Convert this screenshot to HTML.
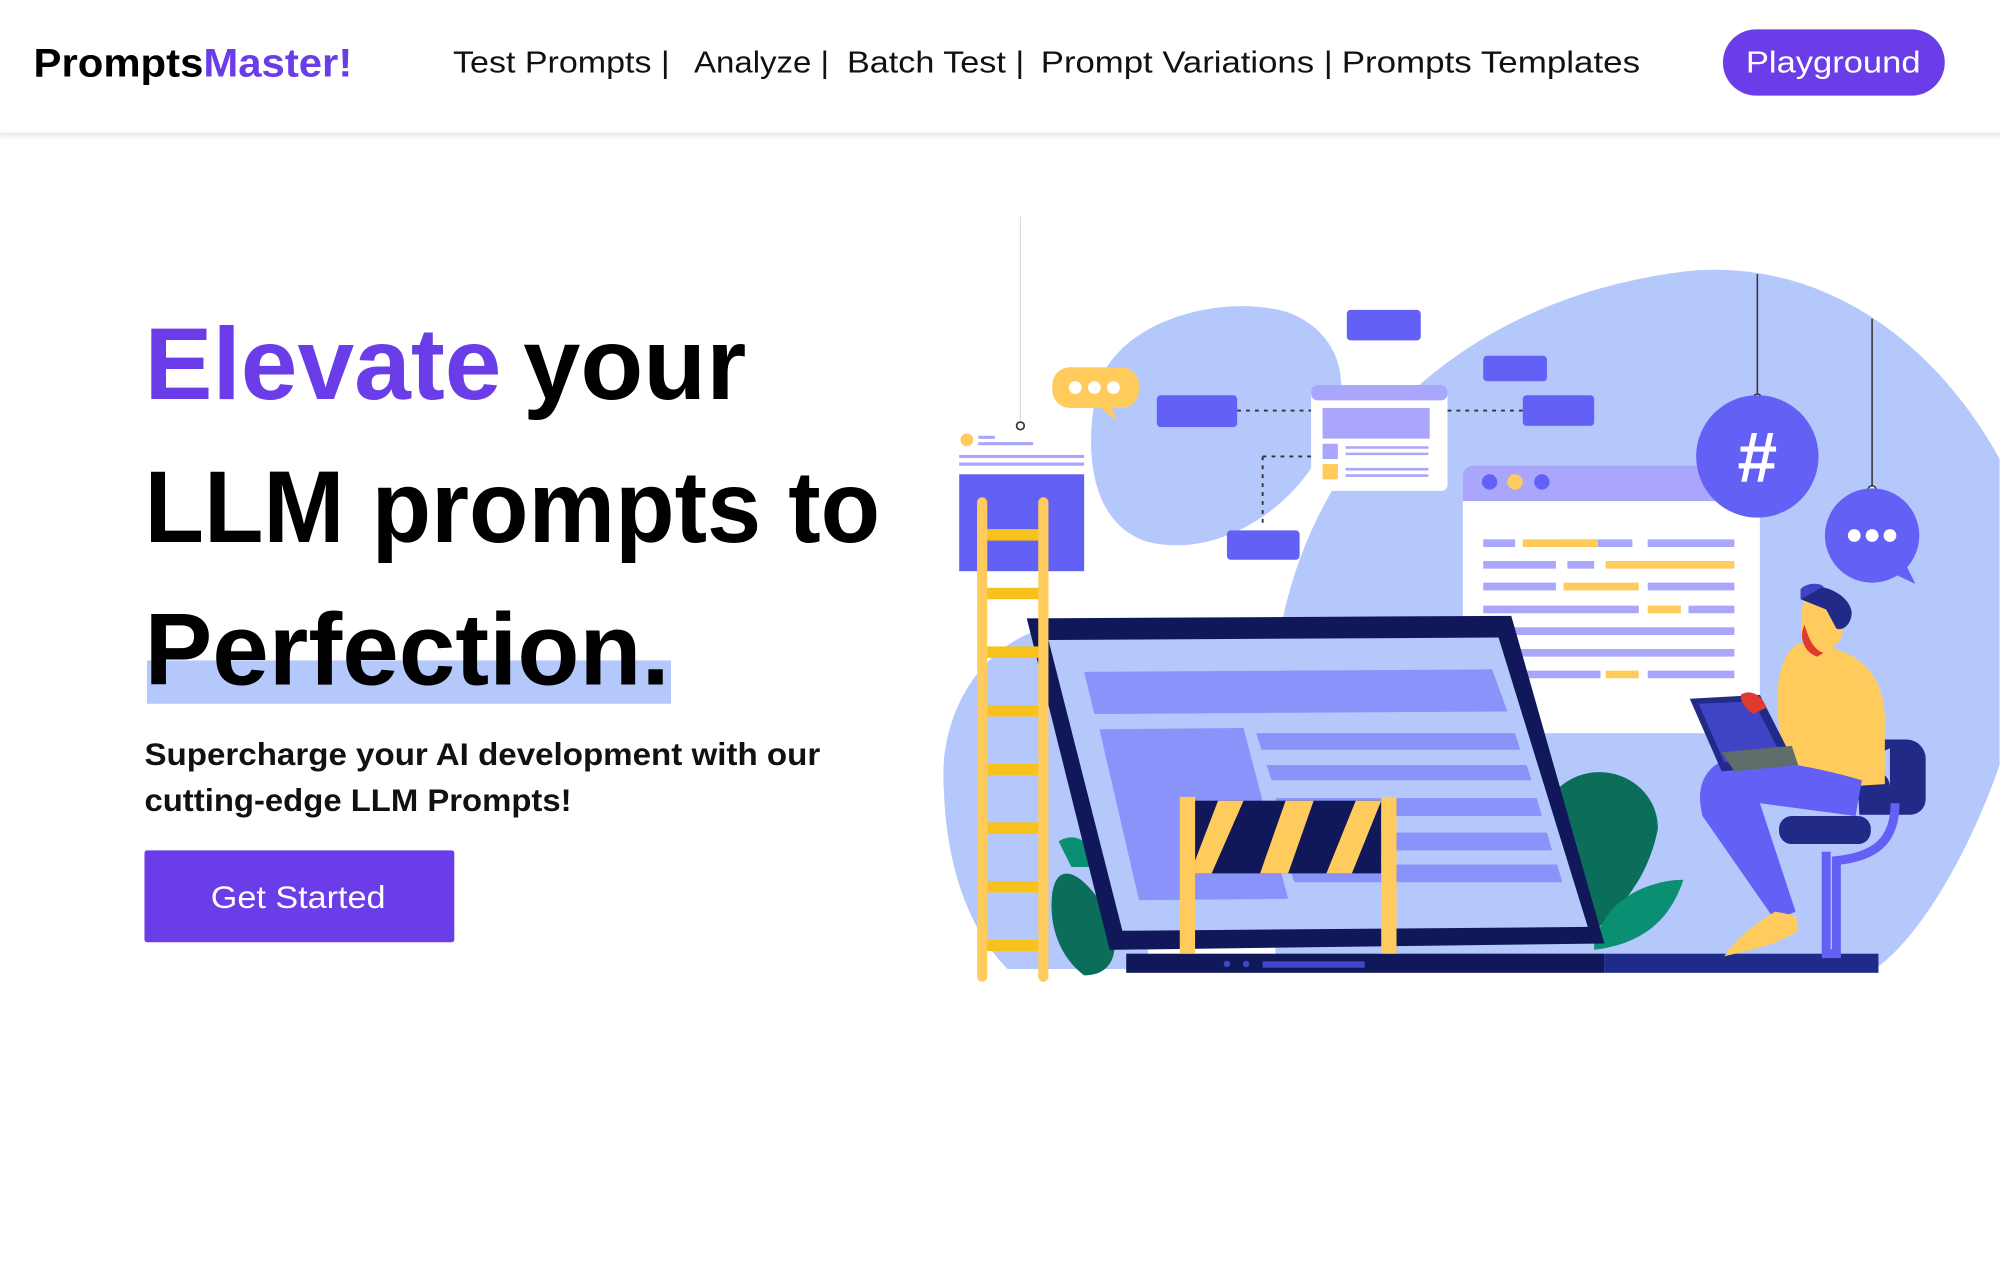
<!DOCTYPE html>
<html><head><meta charset="utf-8"><style>
html,body{margin:0;padding:0;background:#fff;width:2000px;height:1275px;overflow:hidden}
svg{display:block}
text{font-family:"Liberation Sans",sans-serif}
</style></head><body>
<svg width="2000" height="1275" viewBox="0 0 1568 1000" xmlns="http://www.w3.org/2000/svg">
<defs><linearGradient id="sh" x1="0" y1="0" x2="0" y2="1"><stop offset="0" stop-color="#e9e9ee"/><stop offset="1" stop-color="#fff"/></linearGradient></defs>
<rect width="1568" height="1000" fill="#fff"/>
<rect y="104" width="1568" height="6" fill="url(#sh)"/>
<!-- header -->
<text x="26" y="60" font-size="31" font-weight="bold" textLength="250" lengthAdjust="spacingAndGlyphs"><tspan fill="#000">Prompts</tspan><tspan fill="#6a3de8">Master!</tspan></text>
<g font-size="24" fill="#111">
<text x="355" y="57" textLength="170" lengthAdjust="spacingAndGlyphs">Test Prompts |</text>
<text x="544" y="57" textLength="106" lengthAdjust="spacingAndGlyphs">Analyze |</text>
<text x="664" y="57" textLength="139" lengthAdjust="spacingAndGlyphs">Batch Test |</text>
<text x="816" y="57" textLength="229" lengthAdjust="spacingAndGlyphs">Prompt Variations |</text>
<text x="1052" y="57" textLength="234" lengthAdjust="spacingAndGlyphs">Prompts Templates</text>
</g>
<rect x="1351" y="23" width="174" height="52" rx="26" fill="#6a3de8"/>
<text x="1369" y="57" font-size="24" fill="#fff" textLength="137" lengthAdjust="spacingAndGlyphs">Playground</text>
<!-- hero text -->
<rect x="115" y="518" width="411" height="34" fill="#b5c8fb"/>
<g font-size="80" font-weight="bold">
<text x="113" y="313" fill="#6a3de8" textLength="280" lengthAdjust="spacingAndGlyphs">Elevate</text>
<text x="410" y="313" fill="#000" textLength="175" lengthAdjust="spacingAndGlyphs">your</text>
<text x="113" y="425" fill="#000" textLength="577" lengthAdjust="spacingAndGlyphs">LLM prompts to</text>
<text x="113" y="537" fill="#000" textLength="412" lengthAdjust="spacingAndGlyphs">Perfection.</text>
</g>
<g font-size="25" font-weight="bold" fill="#111">
<text x="113" y="600" textLength="530" lengthAdjust="spacingAndGlyphs">Supercharge your AI development with our</text>
<text x="113" y="636" textLength="335" lengthAdjust="spacingAndGlyphs">cutting-edge LLM Prompts!</text>
</g>
<rect x="113" y="667" width="243" height="72" rx="2" fill="#6a3de8"/>
<text x="165" y="712" font-size="25" fill="#fff" textLength="137" lengthAdjust="spacingAndGlyphs">Get Started</text>
<!-- illustration -->
<g>
<path d="M1000 520 C1020 350 1150 230 1330 212 C1450 205 1530 290 1568 360 L1568 600 C1540 680 1500 740 1470 760 L1000 760 Z" fill="#b5c8fb"/>
<path d="M862 300 C880 250 960 230 1010 245 C1050 260 1060 300 1045 330 C1030 390 960 440 900 425 C850 410 850 340 862 300 Z" fill="#b5c8fb"/>
<path d="M740 620 C735 560 770 500 830 490 L900 490 L900 760 L790 760 C760 730 742 680 740 620 Z" fill="#b5c8fb"/>
<line x1="800" y1="170" x2="800" y2="330" stroke="#ddd" stroke-width="1"/>
<circle cx="800" cy="334" r="3" fill="#fff" stroke="#333" stroke-width="1.3"/>
<!-- connectors -->
<path d="M970 322 H1028 M1135 322 H1194 M990 358 H1028 M990 358 V410" stroke="#333" stroke-width="1.5" stroke-dasharray="3 4" fill="none"/>
<g fill="#6360f6">
<rect x="1056" y="243" width="58" height="24" rx="3"/>
<rect x="907" y="310" width="63" height="25" rx="3"/>
<rect x="1163" y="279" width="50" height="20" rx="3"/>
<rect x="1194" y="310" width="56" height="24" rx="3"/>
<rect x="962" y="416" width="57" height="23" rx="3"/>
</g>
<!-- small window -->
<rect x="1028" y="302" width="107" height="83" rx="5" fill="#fff"/>
<rect x="1028" y="302" width="107" height="12" rx="5" fill="#aaa6fb"/>
<rect x="1037" y="320" width="84" height="24" fill="#aaa6fb"/>
<rect x="1037" y="348" width="12" height="12" fill="#aaa6fb"/>
<rect x="1037" y="364" width="12" height="12" fill="#ffcb5c"/>
<path d="M1055 351 H1120 M1055 356 H1120 M1055 368 H1120 M1055 373 H1120" stroke="#aaa6fb" stroke-width="2"/>
<!-- yellow chat -->
<rect x="825" y="288" width="68" height="32" rx="14" fill="#ffcb5c"/>
<path d="M860 318 L876 330 L870 316Z" fill="#ffcb5c"/>
<g fill="#fff"><circle cx="843" cy="304" r="5"/><circle cx="858" cy="304" r="5"/><circle cx="873" cy="304" r="5"/></g>
<!-- left card -->
<circle cx="758" cy="345" r="5" fill="#ffcb5c"/>
<path d="M767 343 H780 M767 348 H810 M752 358 H850 M752 364 H850" stroke="#aaa6fb" stroke-width="2.5"/>
<rect x="752" y="372" width="98" height="76" fill="#6360f6"/>
<!-- big window -->
<rect x="1147" y="365" width="233" height="210" rx="8" fill="#fff"/>
<path d="M1147 393 V373 a8 8 0 0 1 8 -8 H1372 a8 8 0 0 1 8 8 V393 Z" fill="#aaa6fb"/>
<circle cx="1168" cy="378" r="6" fill="#6360f6"/><circle cx="1188" cy="378" r="6" fill="#ffcb5c"/><circle cx="1209" cy="378" r="6" fill="#6360f6"/>
<g stroke-width="6">
<path d="M1163 426 H1188 M1226 426 H1280 M1292 426 H1360 M1163 443 H1220 M1229 443 H1250 M1292 460 H1360 M1163 460 H1220 M1163 478 H1285 M1324 478 H1360 M1163 495 H1360 M1163 512 H1360 M1163 529 H1255 M1292 529 H1360" stroke="#aaa6fb"/>
<path d="M1194 426 H1253 M1259 443 H1360 M1226 460 H1285 M1292 478 H1318 M1259 529 H1285" stroke="#ffcb5c"/>
</g>
<!-- hash -->
<line x1="1378" y1="215" x2="1378" y2="310" stroke="#333" stroke-width="1.2"/>
<circle cx="1378" cy="312" r="3" fill="#fff" stroke="#333" stroke-width="1.2"/>
<circle cx="1378" cy="358" r="48" fill="#6360f6"/>
<text x="1378" y="378" font-size="56" font-weight="bold" fill="#fff" text-anchor="middle">#</text>
<line x1="1468" y1="250" x2="1468" y2="382" stroke="#333" stroke-width="1.2"/>
<circle cx="1468" cy="384" r="3" fill="#fff" stroke="#333" stroke-width="1.2"/>
<circle cx="1468" cy="420" r="37" fill="#6360f6"/>
<path d="M1485 450 L1502 458 L1492 438Z" fill="#6360f6"/>
<g fill="#fff"><circle cx="1454" cy="420" r="5"/><circle cx="1468" cy="420" r="5"/><circle cx="1482" cy="420" r="5"/></g>
<!-- plants -->
<path d="M1220 620 C1250 590 1300 610 1300 650 C1290 700 1260 720 1240 740 Z" fill="#0b6e5a"/>
<path d="M1250 740 C1260 700 1300 690 1320 690 C1310 720 1290 740 1250 745Z" fill="#0a8f72"/>
<path d="M825 700 C830 670 855 690 870 720 C880 750 870 765 850 765 C830 750 822 725 825 700Z" fill="#0b6e5a"/>
<path d="M830 660 C845 650 860 665 860 680 L840 680Z" fill="#0a8f72"/>
<!-- monitor -->
<path d="M805 485 L1185 483 L1258 740 L870 745 Z" fill="#10185a"/>
<path d="M822 502 L1175 500 L1245 727 L880 730 Z" fill="#b5c8fb"/>
<path d="M850 527 L1170 525 L1182 558 L858 560Z" fill="#8a93fa"/>
<path d="M862 572 L975 571 L1010 705 L893 706Z" fill="#8a93fa"/>
<g fill="#8a93fa">
<path d="M985 575 H1188 L1192 588 H989Z"/><path d="M993 600 H1197 L1201 612 H997Z"/><path d="M1000 626 H1205 L1209 640 H1004Z"/><path d="M1005 653 H1213 L1217 667 H1010Z"/><path d="M1010 678 H1221 L1225 692 H1015Z"/>
</g>
<rect x="883" y="748" width="375" height="15" fill="#10185a"/>
<rect x="1258" y="748" width="215" height="15" fill="#1f2b8a"/>
<rect x="990" y="754" width="80" height="5" fill="#3f48c6"/>
<circle cx="962" cy="756" r="2.5" fill="#3f48c6"/><circle cx="977" cy="756" r="2.5" fill="#3f48c6"/>
<!-- barrier -->
<rect x="937" y="628" width="146" height="57" fill="#10185a"/>
<g fill="#ffcb5c"><path d="M937 675 L955 628 H975 L950 685 H937Z"/><path d="M988 685 L1008 628 H1030 L1010 685Z"/><path d="M1040 685 L1063 628 H1083 L1060 685Z"/></g>
<rect x="925" y="625" width="12" height="123" fill="#ffcb5c"/>
<rect x="1083" y="625" width="12" height="123" fill="#ffcb5c"/>
<!-- ladder -->
<g fill="#f8c21d">
<rect x="772" y="415" width="46" height="9"/><rect x="772" y="461" width="46" height="9"/><rect x="772" y="507" width="46" height="9"/><rect x="772" y="553" width="46" height="9"/><rect x="772" y="599" width="46" height="9"/><rect x="772" y="645" width="46" height="9"/><rect x="772" y="691" width="46" height="9"/><rect x="772" y="737" width="46" height="9"/>
</g>
<rect x="766" y="390" width="8" height="380" rx="4" fill="#ffcb5c"/>
<rect x="814" y="390" width="8" height="380" rx="4" fill="#ffcb5c"/>
<!-- person -->
<path d="M1440 605 h30 a12 12 0 0 1 12 12 v-30 M1455 580 h40 a15 15 0 0 1 15 15 v32 a12 12 0 0 1 -12 12 h-40 Z" fill="#222a88"/>
<path d="M1486 630 C1486 660 1470 672 1440 675 L1440 748 L1432 748 L1432 668" stroke="#6360f6" stroke-width="7" fill="none"/>
<rect x="1395" y="640" width="72" height="22" rx="10" fill="#222a88"/>
<path d="M1410 505 C1440 505 1475 515 1478 560 L1478 615 L1400 620 L1395 570 C1390 530 1400 510 1410 505Z" fill="#ffcb5c"/>
<path d="M1345 600 C1360 590 1420 600 1460 612 L1455 640 L1380 630 L1408 715 L1392 722 L1335 640 C1330 620 1335 608 1345 600Z" fill="#6360f6"/>
<path d="M1392 715 L1408 718 L1410 730 C1395 740 1375 745 1352 750 C1360 738 1375 725 1392 715Z" fill="#ffcb5c"/>
<path d="M1325 548 L1380 545 L1408 600 L1350 605 Z" fill="#222a88"/>
<path d="M1332 552 L1375 550 L1398 595 L1352 598 Z" fill="#3f44c4"/>
<path d="M1350 590 L1405 585 L1410 600 L1360 605Z" fill="#5f6c6a"/>
<path d="M1365 545 C1372 540 1382 545 1385 555 L1375 560 C1368 556 1365 550 1365 545Z" fill="#e03a2e"/>
<path d="M1415 470 C1430 465 1447 475 1445 495 C1443 508 1432 512 1420 510 C1412 505 1410 485 1415 470Z" fill="#ffcb5c"/>
<path d="M1415 490 C1418 500 1422 510 1430 512 L1425 515 C1415 512 1410 500 1415 490Z" fill="#e03a2e"/>
<path d="M1412 462 C1425 455 1450 465 1452 480 C1452 490 1445 495 1440 493 L1432 478 L1412 470Z" fill="#222a88"/>
<path d="M1412 462 C1415 458 1425 456 1430 460 L1412 470Z" fill="#3f44c4"/>
</g>
</svg>
</body></html>
